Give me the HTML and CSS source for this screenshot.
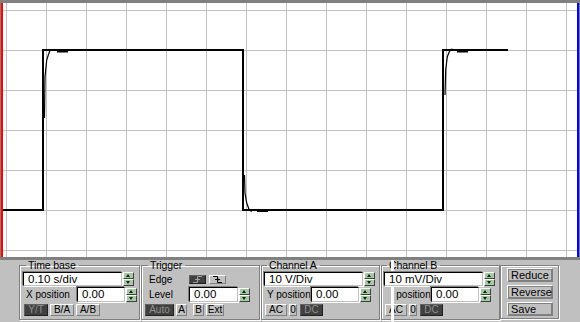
FILE: index.html
```html
<!DOCTYPE html>
<html>
<head>
<meta charset="utf-8">
<link rel="stylesheet" href="styles.css">
</head>
<body>
<div class="app">
  <svg class="screen" width="580" height="260" viewBox="0 0 580 260">
    <rect x="0" y="0" width="580" height="260" fill="#ffffff"/>
    <g stroke="#c0c0c0" stroke-width="1">
      <path d="M6.5 3V257M46.5 3V257M86.5 3V257M126.5 3V257M166.5 3V257M206.5 3V257M246.5 3V257M286.5 3V257M326.5 3V257M366.5 3V257M406.5 3V257M446.5 3V257M486.5 3V257M526.5 3V257M566.5 3V257"/>
      <path d="M3 10.5H577M3 50.5H577M3 90.5H577M3 130.5H577M3 170.5H577M3 210.5H577M3 250.5H577"/>
    </g>
    <g fill="none" stroke="#000" stroke-width="2">
      <polyline points="3,210 43,210 43,50 243,50 243,210 443,210 443,50 508,50"/>
    </g>
    <g fill="none" stroke="#000" stroke-width="1.2">
      <polyline points="44.5,118 45,77 46.7,60 48.3,55 50,50.5 52,49.5"/>
      <polyline points="244.5,175 245,193 246.7,203 249.3,210 251.7,211.5"/>
      <polyline points="445,95 445.7,70 447.3,56.7 449.3,51.7 451,49.3 453,49.3"/>
    </g>
    <g fill="none" stroke="#000" stroke-width="2">
      <path d="M57 51.5H68M257 211H268M457 51.5H468"/>
    </g>
    <rect x="0" y="0" width="580" height="3" fill="#808080"/>
    <rect x="0" y="257" width="580" height="3" fill="#808080"/>
    <rect x="0" y="3" width="1" height="254" fill="#808080"/>
    <rect x="1" y="3" width="2" height="254" fill="#ff0000"/>
    <rect x="577" y="3" width="2" height="254" fill="#0000ff"/>
    <rect x="579" y="3" width="1" height="254" fill="#808080"/>
  </svg>

  <div class="panel">
    <fieldset class="group g-time">
      <legend>Time base</legend>
      <div class="row r1">
        <div class="field f-wide">0.10 s/div</div>
        <div class="spin"><span class="sb up"></span><span class="sb dn"></span></div>
      </div>
      <div class="row r2">
        <span class="lbl l-x">X position</span>
        <div class="field f-num">0.00</div>
        <div class="spin"><span class="sb up"></span><span class="sb dn"></span></div>
      </div>
      <div class="row r3">
        <span class="btn on b-yt">Y/T</span>
        <span class="btn b-ba">B/A</span>
        <span class="btn b-ab">A/B</span>
      </div>
    </fieldset>

    <fieldset class="group g-trig">
      <legend>Trigger</legend>
      <div class="row r1 edge-row">
        <span class="lbl l-edge">Edge</span>
        <span class="btn on ebtn"><svg width="9" height="7" viewBox="0 0 9 7"><path d="M0 6.5H4.5V0.5H9M2 3.5H7M5 2.5V4.5" stroke="#a0a0a0" fill="none" stroke-width="1"/></svg></span>
        <span class="btn ebtn"><svg width="9" height="7" viewBox="0 0 9 7"><path d="M0 0.5H4.5V6.5H9M2 3.5H7M5 2.5V4.5" stroke="#000" fill="none" stroke-width="1"/></svg></span>
      </div>
      <div class="row r2">
        <span class="lbl l-lvl">Level</span>
        <div class="field f-lvl">0.00</div>
        <div class="spin"><span class="sb up"></span><span class="sb dn"></span></div>
      </div>
      <div class="row r3">
        <span class="btn on b-auto">Auto</span>
        <span class="btn b-a">A</span>
        <span class="btn b-b">B</span>
        <span class="btn b-ext">Ext</span>
      </div>
    </fieldset>

    <fieldset class="group g-cha">
      <legend>Channel A</legend>
      <div class="row r1">
        <div class="field f-wide">10 V/Div</div>
        <div class="spin"><span class="sb up"></span><span class="sb dn"></span></div>
      </div>
      <div class="row r2">
        <span class="lbl l-y">Y position</span>
        <div class="field f-num">0.00</div>
        <div class="spin"><span class="sb up"></span><span class="sb dn"></span></div>
      </div>
      <div class="row r3">
        <span class="btn b-ac">AC</span>
        <span class="btn b-0">0</span>
        <span class="btn on b-dc">DC</span>
      </div>
    </fieldset>

    <fieldset class="group g-chb">
      <legend>Channel B</legend>
      <div class="row r1">
        <div class="field f-wide">10 mV/Div</div>
        <div class="spin"><span class="sb up"></span><span class="sb dn"></span></div>
      </div>
      <div class="row r2">
        <span class="lbl l-y"><span class="hid">Y</span> position</span>
        <div class="field f-num">0.00</div>
        <div class="spin"><span class="sb up"></span><span class="sb dn"></span></div>
      </div>
      <div class="row r3">
        <span class="btn b-ac">AC</span>
        <span class="btn b-0">0</span>
        <span class="btn on b-dc">DC</span>
      </div>
    </fieldset>

    <div class="group g-act">
      <span class="btn act">Reduce</span>
      <span class="btn act">Reverse</span>
      <span class="btn act">Save</span>
    </div>

    <div class="glitch"></div>
  </div>
</div>
</body>
</html>
```

FILE: styles.css
```css
* { box-sizing: border-box; }
html, body { margin: 0; padding: 0; background: #c0c0c0; }
body {
  width: 580px;
  height: 322px;
  overflow: hidden;
  font-family: "Liberation Sans", Arial, sans-serif;
  font-size: 10px;
  color: #000;
}
.app { width: 580px; height: 322px; }
.screen { display: block; }

.panel {
  position: relative;
  height: 62px;
  display: flex;
  align-items: flex-start;
  padding-left: 19px;
}

.group {
  margin: 0;
  height: 60px;
  min-width: 0;
  border: 1px solid #808080;
  box-shadow: inset 1px 1px #fff, 1px 1px #fff;
  padding: 0 0 0 3px;
}
fieldset.group legend {
  font-size: 10.5px;
  line-height: 10px;
  height: 10px;
  padding: 0 3px 0 2px;
  margin-left: 3px;
  letter-spacing: -0.1px;
}
.g-time { width: 121px; }
.g-trig { width: 119px; margin-left: 1px; }
.g-cha { width: 119px; margin-left: 1px; padding-left: 2px; }
.g-chb { width: 119px; margin-left: 1px; padding-left: 2px; }
.g-act {
  width: 59px;
  margin-left: 0;
  margin-top: 5px;
  height: 54px;
  display: flex;
  flex-direction: column;
  align-items: flex-start;
  padding: 2px 0 0 6px;
  gap: 3px;
}

.row { display: flex; align-items: center; }
.r1 { margin-top: 2px; height: 14px; }
.r2 { margin-top: 1px; height: 15px; }
.r3 { margin-top: 2px; height: 12px; }

.field, .spin { position: relative; z-index: 2; }

.field {
  background: #fff;
  height: 100%;
  border: 1px solid;
  border-color: #000 #c0c0c0 #c0c0c0 #000;
  box-shadow: -1px -1px 0 #808080, 1px 1px 0 #fff;
  font-size: 11.5px;
  line-height: 12px;
  padding-left: 4px;
  white-space: nowrap;
}
.f-wide { width: 99px; }
.f-num { width: 48px; }
.f-lvl { width: 49px; margin-left: 17px; }

.spin {
  width: 11px;
  height: 14px;
  display: flex;
  flex-direction: column;
  margin-left: 1px;
}
.sb {
  flex: 1;
  background: #a8c8a8;
  border: 1px solid;
  border-color: #fff #404040 #404040 #fff;
  position: relative;
}
.sb::after {
  content: "";
  position: absolute;
  left: 2px;
  width: 0; height: 0;
  border-left: 2.5px solid transparent;
  border-right: 2.5px solid transparent;
}
.up::after { top: 1px; border-bottom: 3px solid #003000; }
.dn::after { top: 1px; border-top: 3px solid #003000; }

.lbl { white-space: nowrap; font-size: 10px; }
.hid { visibility: hidden; }
.l-x { margin-left: 3px; width: 51px; }
.l-y { margin-left: 3px; width: 44px; }
.l-edge { margin-left: 4px; width: 40px; }
.l-lvl { margin-left: 4px; width: 23px; }

.btn {
  display: inline-flex;
  align-items: center;
  justify-content: center;
  height: 12px;
  background: #c0c0c0;
  border: 1px solid;
  border-color: #fff #808080 #808080 #fff;
  font-size: 10px;
  line-height: 10px;
  white-space: nowrap;
}
.btn.on {
  background: #404040;
  color: #909090;
  border-color: #606060 #202020 #202020 #606060;
}
.b-yt { width: 24px; margin-left: 1px; }
.b-ba { width: 24px; margin-left: 2px; }
.b-ab { width: 24px; margin-left: 2px; }
.edge-row .ebtn { height: 9px; width: 17px; }
.edge-row .ebtn + .ebtn { margin-left: 3px; }
.b-auto { width: 29px; }
.b-a { width: 11px; margin-left: 2px; }
.b-b { width: 11px; margin-left: 6px; }
.b-ext { width: 18px; margin-left: 2px; }
.b-ac { width: 22px; margin-left: 1px; }
.b-0 { width: 8px; margin-left: 2px; }
.b-dc { width: 23px; margin-left: 3px; }
.act {
  width: 46px;
  height: 14px;
  font-size: 11px;
  justify-content: flex-start;
  padding-left: 3px;
  box-shadow: 0 0 0 1px #808080 inset;
}

.glitch {
  position: absolute;
  z-index: 1;
  left: 391px;
  top: 0;
  width: 3px;
  height: 62px;
  background: #fff;
}
```
